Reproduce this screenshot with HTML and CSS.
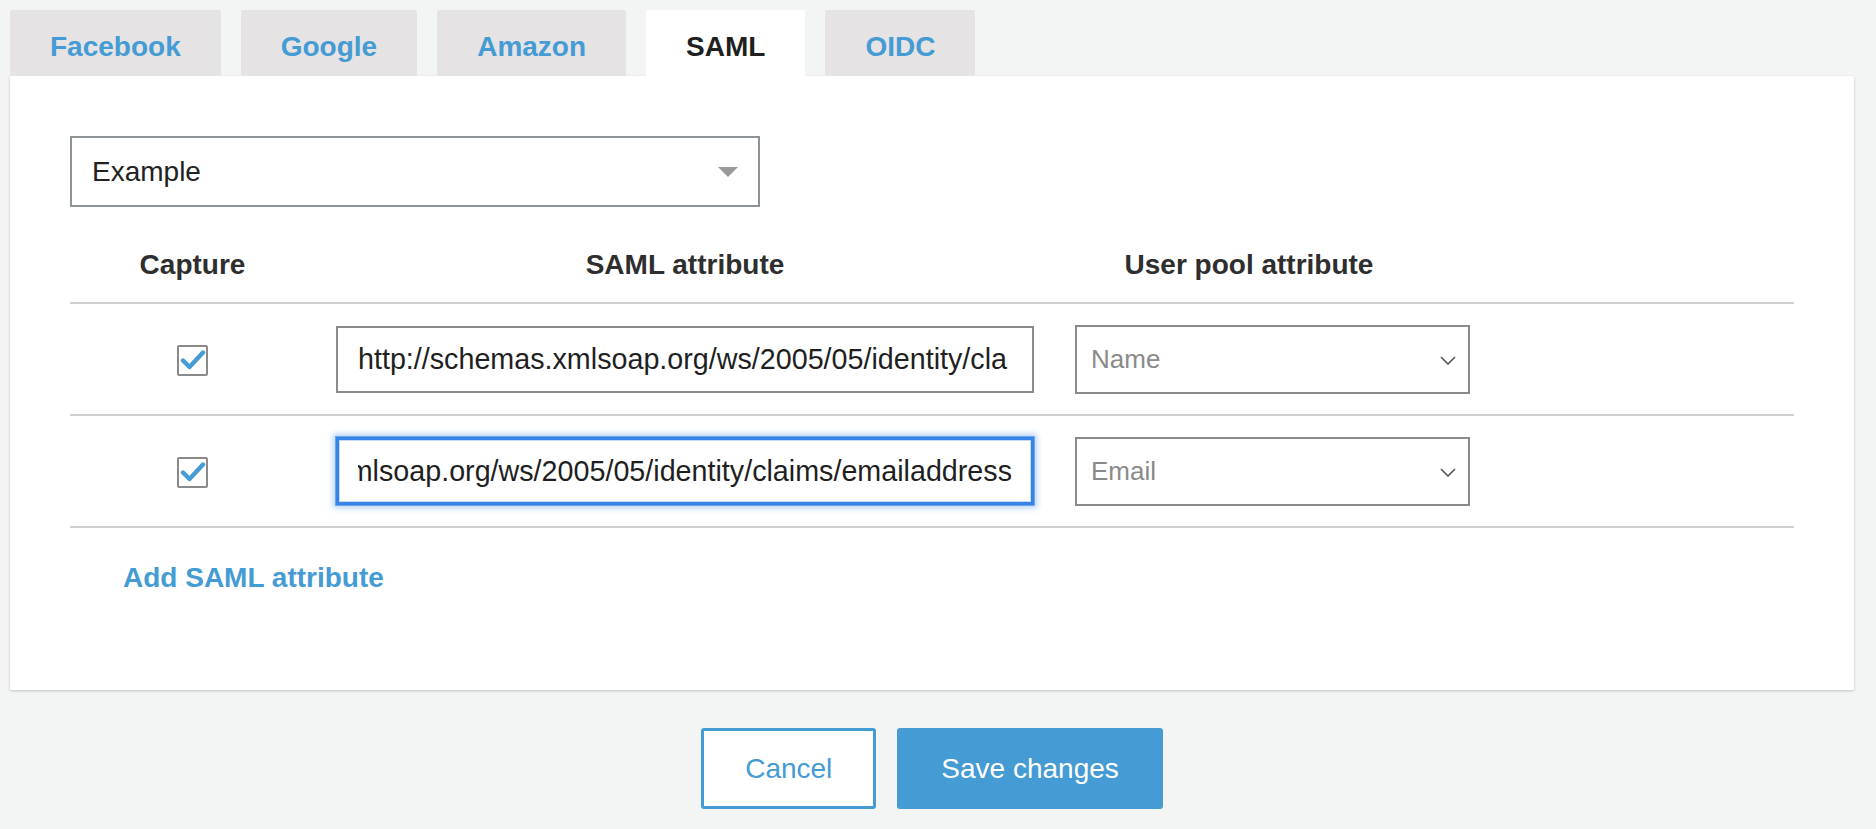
FILE: index.html
```html
<!DOCTYPE html>
<html lang="en">
<head>
<meta charset="utf-8">
<title>SAML attribute mapping</title>
<link rel="stylesheet" href="styles.css">
</head>
<body>
<div class="page">
  <nav class="tabs">
    <a class="tab">Facebook</a>
    <a class="tab">Google</a>
    <a class="tab">Amazon</a>
    <a class="tab active">SAML</a>
    <a class="tab">OIDC</a>
  </nav>
  <section class="panel">
    <div class="provider-select">
      <span class="provider-value">Example</span>
      <span class="caret"></span>
    </div>
    <div class="attr-table">
      <div class="attr-row attr-head">
        <div class="col-capture">Capture</div>
        <div class="col-saml">SAML attribute</div>
        <div class="col-pool">User pool attribute</div>
      </div>
      <div class="attr-row">
        <div class="col-capture">
          <span class="checkbox"><svg viewBox="0 0 27 27" width="27" height="27"><path d="M4 13.5 L10.5 20 L24 5.5" fill="none" stroke="#459bd4" stroke-width="4.4" stroke-linecap="round" stroke-linejoin="round"/></svg></span>
        </div>
        <div class="col-saml">
          <div class="text-input"><div class="text-clip"><span>http://schemas.xmlsoap.org/ws/2005/05/identity/claims/name</span></div></div>
        </div>
        <div class="col-pool">
          <div class="pool-select"><span class="pool-value">Name</span><svg class="chevron" viewBox="0 0 16 9" width="16" height="9"><polyline points="1,1 8,8 15,1" fill="none" stroke="#555" stroke-width="1.6"/></svg></div>
        </div>
      </div>
      <div class="attr-row">
        <div class="col-capture">
          <span class="checkbox"><svg viewBox="0 0 27 27" width="27" height="27"><path d="M4 13.5 L10.5 20 L24 5.5" fill="none" stroke="#459bd4" stroke-width="4.4" stroke-linecap="round" stroke-linejoin="round"/></svg></span>
        </div>
        <div class="col-saml">
          <div class="text-input focused"><div class="text-clip scrolled"><span>http://schemas.xmlsoap.org/ws/2005/05/identity/claims/emailaddress</span></div></div>
        </div>
        <div class="col-pool">
          <div class="pool-select"><span class="pool-value">Email</span><svg class="chevron" viewBox="0 0 16 9" width="16" height="9"><polyline points="1,1 8,8 15,1" fill="none" stroke="#555" stroke-width="1.6"/></svg></div>
        </div>
      </div>
    </div>
    <a class="add-link">Add SAML attribute</a>
  </section>
  <div class="actions">
    <button class="btn btn-outline">Cancel</button>
    <button class="btn btn-primary">Save changes</button>
  </div>
</div>
</body>
</html>
```
FILE: styles.css
```css
* { box-sizing: border-box; }

html, body {
  margin: 0;
  padding: 0;
  background: #f3f5f4;
  font-family: "Liberation Sans", Arial, Helvetica, sans-serif;
  color: #222;
}

.page {
  padding: 10px 22px 0 10px;
}

/* Tabs */
.tabs {
  display: flex;
  gap: 20px;
}

.tab {
  display: block;
  padding: 23px 40px 15px;
  font-size: 28px;
  line-height: 28px;
  font-weight: bold;
  color: #459bd4;
  background: #e5e3e4;
  border-radius: 2px 2px 0 0;
  cursor: pointer;
}

.tab.active {
  background: #fff;
  color: #1f1f1f;
  position: relative;
  z-index: 1;
}

/* Panel */
.panel {
  background: #fff;
  border-radius: 0 2px 2px 2px;
  box-shadow: 0 1px 3px rgba(0, 0, 0, 0.2);
  padding: 60px 60px 60px;
}

.provider-select {
  width: 690px;
  height: 71px;
  border: 2px solid #8c9399;
  display: flex;
  align-items: center;
  justify-content: space-between;
  padding: 0 20px;
  font-size: 28px;
  color: #222;
}

.caret {
  width: 0;
  height: 0;
  border-left: 10px solid transparent;
  border-right: 10px solid transparent;
  border-top: 10px solid #999;
}

/* Attribute table */
.attr-row {
  display: flex;
  align-items: center;
  height: 112px;
  border-bottom: 2px solid #d0d0d0;
}

.attr-row.attr-head {
  height: auto;
  align-items: flex-start;
  padding: 42px 0 21px;
  font-size: 28px;
  line-height: 32px;
  font-weight: bold;
  color: #2e2e2e;
}

.col-capture {
  flex: none;
  width: 245px;
  display: flex;
  justify-content: center;
}

.col-saml {
  flex: none;
  width: 740px;
  padding: 0 21px;
  text-align: center;
}

.col-pool {
  flex: none;
  width: 388px;
  text-align: center;
}

.attr-row:not(.attr-head) .col-pool {
  padding-left: 20px;
}

.checkbox {
  width: 31px;
  height: 31px;
  border: 2px solid #8a8a8a;
  border-radius: 2px;
  background: #fff;
  display: block;
  margin-top: 2px;
}

.checkbox svg {
  display: block;
}

.text-input {
  height: 67px;
  border: 2px solid #8b8b8b;
  padding: 0 24px 0 20px;
  display: flex;
  align-items: center;
  font-size: 28.7px;
  color: #1f1f1f;
  background: #fff;
}

.text-clip {
  flex: 1;
  min-width: 0;
  overflow: hidden;
  white-space: nowrap;
  display: flex;
  text-align: left;
}

.text-clip span {
  flex: none;
}

.text-clip.scrolled {
  justify-content: flex-end;
}

.text-input.focused {
  height: 68px;
  border: 3px solid #3584e6;
  padding: 0 19px;
  box-shadow: 0 0 0 1px #6aa5ee, 0 0 6px 3px rgba(70, 140, 230, 0.4), inset 0 0 0 1px #c3daf7;
}

.pool-select {
  width: 395px;
  height: 69px;
  border: 2px solid #8b8b8b;
  display: flex;
  align-items: center;
  justify-content: space-between;
  padding: 0 12px 0 14px;
  background: #fff;
  text-align: left;
}

.pool-value {
  font-size: 26px;
  color: #8a8a8a;
}

.chevron {
  display: block;
  margin-top: 2px;
}

.add-link {
  display: block;
  margin: 34px 0 36px 53px;
  font-size: 28px;
  line-height: 32px;
  font-weight: bold;
  color: #459bd4;
  cursor: pointer;
}

/* Actions */
.actions {
  display: flex;
  justify-content: center;
  gap: 21px;
  margin-top: 38px;
}

.btn {
  height: 81px;
  padding: 0 41px;
  border: 3px solid #459bd4;
  border-radius: 3px;
  font-family: "Liberation Sans", Arial, Helvetica, sans-serif;
  font-size: 28px;
  cursor: pointer;
}

.btn-outline {
  background: #fff;
  color: #459bd4;
}

.btn-primary {
  background: #459bd4;
  color: #fff;
}
```
